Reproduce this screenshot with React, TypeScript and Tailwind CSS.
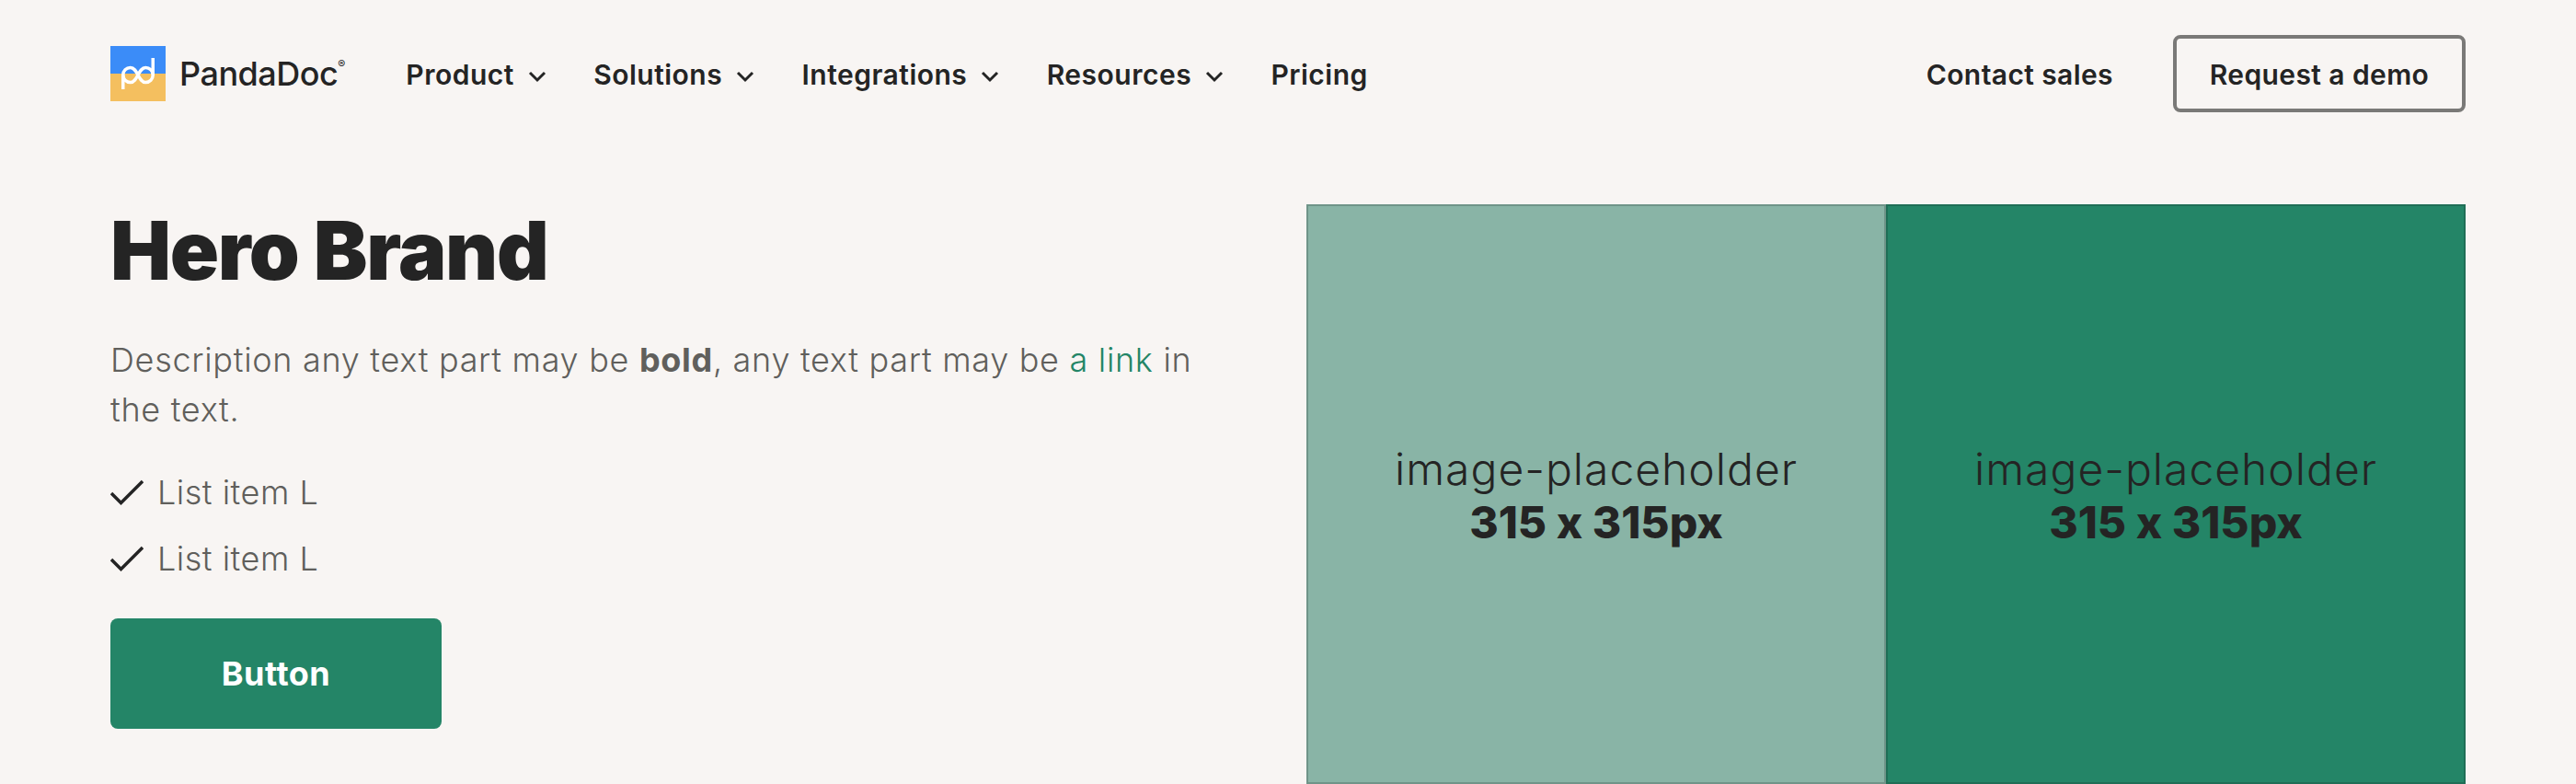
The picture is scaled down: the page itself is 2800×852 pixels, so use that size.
import React from "react";

const navItems = [
  { label: "Product", hasMenu: true },
  { label: "Solutions", hasMenu: true },
  { label: "Integrations", hasMenu: true },
  { label: "Resources", hasMenu: true },
  { label: "Pricing", hasMenu: false },
];

const Logo = () => (
  <div className="flex items-center">
    <svg width="60" height="60" viewBox="0 0 60 60" className="shrink-0">
      <rect width="60" height="30" fill="#3b8cf8" />
      <rect y="30" width="60" height="30" fill="#f4bf5f" />
      <g fill="none" stroke="#fff" strokeWidth="3.5">
        <path d="M13.75 47V31.5a8 8 0 0 1 8-8c8 0 8.5 16 16.5 16a8 8 0 0 0 8-8V13" />
        <path d="M13.75 31.5a8 8 0 0 0 8 8c8 0 8.5-16 16.5-16a8 8 0 0 1 8 8" />
      </g>
    </svg>
    <span className="ml-[15px] text-[36px] font-medium leading-none tracking-[-0.5px] text-[#242424]">PandaDoc</span>
    <span className="mb-5 text-[12px] leading-none text-[#242424]">®</span>
  </div>
);

const Chevron = () => (
  <svg width="20" height="14" viewBox="0 0 20 14" fill="none" stroke="#242424" strokeWidth="3" className="ml-[15px] mt-1">
    <path d="M2 3l8 8 8-8" />
  </svg>
);

const Check = () => (
  <svg width="36" height="28" viewBox="0 0 36 28" fill="none" stroke="#242424" strokeWidth="3.5" className="shrink-0">
    <path d="M1 15l10.5 10.5L35 2" />
  </svg>
);

const Placeholder = ({ light }: { light?: boolean }) => (
  <div
    className={`flex h-[630px] w-[630px] flex-col items-center justify-center border-2 pt-[4px] text-[#242424] ${
      light ? "border-[#6f9488] bg-[#89b4a6]" : "border-[#1f6e56] bg-[#248567]"
    }`}
  >
    <div className="text-[48px] font-light leading-[58px] tracking-[1px]">image-placeholder</div>
    <div className="text-[48px] font-extrabold leading-[58px] [font-feature-settings:'calt'_0]">315 x 315px</div>
  </div>
);

export default function App() {
  return (
    <div className="h-[852px] overflow-hidden bg-[#f8f5f3] px-[120px] font-['Inter',sans-serif]">
      <header className="flex h-[160px] items-center justify-between">
        <div className="flex items-center">
          <Logo />
          <nav className="ml-[66px] flex items-center gap-[51.3px] pt-[2px]">
            {navItems.map((item) => (
              <a key={item.label} className="flex items-center text-[30px] font-semibold tracking-[0.5px] text-[#242424]">
                {item.label}
                {item.hasMenu && <Chevron />}
              </a>
            ))}
          </nav>
        </div>
        <div className="flex items-center">
          <a className="pt-[2px] text-[30px] font-semibold tracking-[0.4px] text-[#242424]">Contact sales</a>
          <button className="ml-[65px] h-[84px] w-[318px] rounded-lg border-4 border-[#7a7977] pt-[2px] text-[30px] font-semibold tracking-[0.4px] text-[#242424]">
            Request a demo
          </button>
        </div>
      </header>
      <main className="mt-[62px] flex justify-between">
        <section className="w-[1190px]">
          <h1 className="mt-[-3px] text-[88px] font-black leading-[106px] tracking-[-1.3px] text-[#242424]">Hero Brand</h1>
          <p className="mt-[39px] text-[36px] font-light leading-[54px] tracking-[0.7px] text-[#605f5c]">
            Description any text part may be <b className="font-bold">bold</b>, any text part may be{" "}
            <a className="text-[#248567]">a link</a> in the text.
          </p>
          <ul className="mt-[36px] flex flex-col gap-[18px]">
            {[0, 1].map((i) => (
              <li key={i} className="flex h-[54px] items-center text-[36px] font-light tracking-[0.5px] text-[#605f5c]">
                <Check />
                <span className="ml-[15px]">List item L</span>
              </li>
            ))}
          </ul>
          <button className="mt-[38px] h-[120px] w-[360px] rounded-lg bg-[#248567] text-[36px] font-bold tracking-[0.5px] text-white">
            Button
          </button>
        </section>
        <section className="flex">
          <Placeholder light />
          <Placeholder />
        </section>
      </main>
    </div>
  );
}
